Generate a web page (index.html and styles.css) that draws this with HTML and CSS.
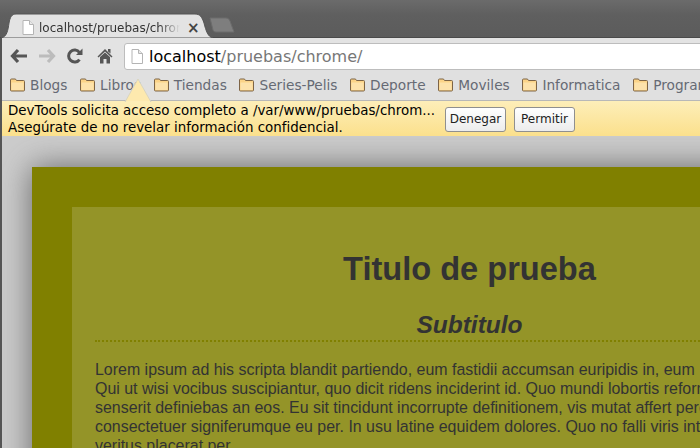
FILE: index.html
```html
<!DOCTYPE html>
<html lang="es">
<head>
<meta charset="UTF-8" />
<title>localhost/pruebas/chrome</title>
<link rel="stylesheet" href="styles.css">
</head>
<body>

<svg class="defs" width="0" height="0">
<symbol id="folder" viewBox="0 0 15 14">
<path d="M.5 12V2Q.5 1 1.500 1H5Q6 1 6.500 2.500H13.500Q14.500 2.500 14.500 3.500V12Q14.500 13 13.500 13H1.500Q.5 13 .5 12Z" fill="#fbd388" stroke="#7d6446" stroke-width="1"/>
<path d="M1.500 4.500H13.500V12H1.500Z" fill="#fde2ab"/>
</symbol>
<symbol id="page" viewBox="0 0 12 15">
<path d="M1 .5H7.500L11.500 4.500V14.500H1Z" fill="#fff" stroke="#b4b4b4"/>
<path d="M7.500 .5V4.500H11.500" fill="#e8e8e8" stroke="#b4b4b4"/>
</symbol>
</svg>

<div class="tabstrip">
  <div class="tab">
    <svg class="tab-shape" width="212" height="25" viewBox="0 0 212 25">
      <path d="M0 25C6 24 7 17 8 10C9 4 11 1 15 1H194C199 1 201 4 203 10C205 18 207 24 212 25Z" fill="#e3e3e3" stroke="#555"/>
    </svg>
    <svg class="tab-icon" width="12" height="15"><use href="#page"/></svg>
    <span class="tab-title">localhost/pruebas/chrome</span>
    <span class="tab-close">×</span>
  </div>
  <svg class="newtab" width="26" height="16" viewBox="0 0 26 16">
    <path d="M1 1H17C19 1 20 2 21 4L25 15H7C5 15 4.500 14 4 13Z" fill="#7e7e7e" stroke="#6c6c6c"/>
  </svg>
</div>

<div class="toolbar">
  <svg class="tool" width="18" height="16" viewBox="0 0 18 16">
    <path d="M8 2L2.500 8L8 14M3 8H17" fill="none" stroke="#565656" stroke-width="3.200"/>
  </svg>
  <svg class="tool" width="18" height="16" viewBox="0 0 18 16">
    <path d="M10 2L15.500 8L10 14M15 8H1" fill="none" stroke="#bcbcbc" stroke-width="3.200"/>
  </svg>
  <svg class="tool tool-reload" width="18" height="16" viewBox="0 0 18 16">
    <path d="M13.500 11.500A6 6 0 1 1 13.500 4.500" fill="none" stroke="#565656" stroke-width="3"/>
    <path d="M10 7H16.500V.5Z" fill="#565656"/>
  </svg>
  <svg class="tool" width="18" height="16" viewBox="0 0 18 16">
    <path d="M9 1L16.500 8.500L15.500 9.500L9 3.500L2.500 9.500L1.500 8.500Z M12 1H14.500V5.500L12 3.500Z" fill="#565656"/>
    <path d="M4 9L9 4.500L14 9V15.500H10.500V11H7.500V15.500H4Z" fill="#565656"/>
  </svg>
  <div class="omnibox">
    <svg class="omni-icon" width="12" height="15"><use href="#page"/></svg>
    <span class="url-host">localhost</span><span class="url-path">/pruebas/chrome/</span>
  </div>
</div>

<div class="bookmarks">
  <a class="bookmark"><svg width="15" height="14"><use href="#folder"/></svg>Blogs</a>
  <a class="bookmark"><svg width="15" height="14"><use href="#folder"/></svg>Libros</a>
  <a class="bookmark"><svg width="15" height="14"><use href="#folder"/></svg>Tiendas</a>
  <a class="bookmark"><svg width="15" height="14"><use href="#folder"/></svg>Series-Pelis</a>
  <a class="bookmark"><svg width="15" height="14"><use href="#folder"/></svg>Deporte</a>
  <a class="bookmark"><svg width="15" height="14"><use href="#folder"/></svg>Moviles</a>
  <a class="bookmark"><svg width="15" height="14"><use href="#folder"/></svg>Informatica</a>
  <a class="bookmark"><svg width="15" height="14"><use href="#folder"/></svg>Programacion</a>
</div>

<div class="infobar">
  <svg class="infobar-arrow" width="28" height="24" viewBox="0 0 28 24">
    <path d="M1 24L14 1L27 24Z" fill="#fde9ae" stroke="#d8d4c0"/>
    <path d="M2 23H26V24H2Z" fill="#fdecb8"/>
  </svg>
  <div class="infobar-text">
    DevTools solicita acceso completo a /var/www/pruebas/chrom...<br>
    Asegúrate de no revelar información confidencial.
  </div>
  <button class="btn">Denegar</button>
  <button class="btn">Permitir</button>
</div>

<div class="viewport">
  <div class="page">
    <div class="inner">
      <h1>Titulo de prueba</h1>
      <h2>Subtitulo</h2>
      <p>Lorem ipsum ad his scripta blandit partiendo, eum fastidii accumsan euripidis in, eum liber hendrerit an. Qui ut wisi vocibus suscipiantur, quo dicit ridens inciderint id. Quo mundi lobortis reformidans eu, legimus senserit definiebas an eos. Eu sit tincidunt incorrupte definitionem, vis mutat affert percipit cu, eirmod consectetuer signiferumque eu per. In usu latine equidem dolores. Quo no falli viris intellegam, ut fugit veritus placerat per.</p>
    </div>
  </div>
</div>

</body>
</html>
```

FILE: styles.css
```css
html, body {
  height: 100%;
}
body {
  margin: 0;
  width: 700px;
  height: 448px;
  overflow: hidden;
  background: #555;
  display: flex;
  flex-direction: column;
  font-family: "DejaVu Sans", sans-serif;
}
.defs {
  position: absolute;
}

/* Tabs */
.tabstrip {
  height: 38px;
  flex-shrink: 0;
  background: linear-gradient(#6b6b6b, #5f5f5f 40%, #5c5c5c);
  border-bottom: 1px solid #4a4a4a;
  box-sizing: border-box;
  display: flex;
  align-items: flex-end;
  padding-left: 1px;
}
.tab {
  position: relative;
  width: 212px;
  height: 25px;
  display: flex;
  align-items: center;
  padding: 4px 0 0 21px;
  box-sizing: border-box;
  font-size: 12px;
  color: #333;
  margin-bottom: -1px;
}
.tab-shape {
  position: absolute;
  left: 0;
  top: 0;
}
.tab-icon {
  position: relative;
  flex-shrink: 0;
  margin-right: 5px;
}
.tab-title {
  position: relative;
  width: 141px;
  overflow: hidden;
  white-space: nowrap;
  -webkit-mask-image: linear-gradient(90deg, #000 85%, transparent);
  mask-image: linear-gradient(90deg, #000 85%, transparent);
}
.tab-close {
  position: relative;
  margin: 1px 0 0 7px;
  font-size: 15px;
  font-weight: bold;
  line-height: 1;
  color: #444;
}
.newtab {
  margin: 0 0 4px -4px;
}

/* Toolbar */
.toolbar {
  height: 32px;
  flex-shrink: 0;
  margin-left: 2px;
  background: #e3e3e3;
  display: flex;
  align-items: center;
  padding: 4px 0 0 8px;
  box-sizing: border-box;
}
.tool {
  margin-right: 10px;
  flex-shrink: 0;
}
.tool-reload {
  margin-right: 12px;
}
.omnibox {
  flex: 1;
  height: 27px;
  margin: 1px -10px 0 0;
  background: #fff;
  border: 1px solid #bdbdbd;
  border-radius: 3px;
  display: flex;
  align-items: center;
  padding-left: 6px;
  font-size: 16px;
  box-sizing: border-box;
}
.omni-icon {
  margin-right: 6px;
}
.url-host {
  color: #000;
}
.url-path {
  color: #777;
}

/* Bookmarks */
.bookmarks {
  height: 31px;
  flex-shrink: 0;
  margin-left: 2px;
  padding-left: 8px;
  background: #e0e0e0;
  border-bottom: 1px solid #b8b8b8;
  box-sizing: border-box;
  display: flex;
  align-items: center;
  gap: 12.700px;
  font-size: 13.700px;
  color: #666a74;
  white-space: nowrap;
  overflow: hidden;
}
.bookmark {
  display: flex;
  align-items: center;
  gap: 5px;
}

/* Infobar */
.infobar {
  position: relative;
  height: 35px;
  flex-shrink: 0;
  margin-left: 2px;
  padding: 1px 0 0 6px;
  background: linear-gradient(#fdeeb9, #fbe08c);
  box-sizing: border-box;
  display: flex;
  align-items: center;
  font-size: 13.400px;
  color: #000;
  white-space: nowrap;
}
.infobar-arrow {
  position: absolute;
  left: 122px;
  top: -23px;
}
.infobar-text {
  line-height: 17px;
  width: 437px;
}
.btn {
  height: 25px;
  width: 61px;
  padding: 0;
  margin-right: 8px;
  font-family: inherit;
  font-size: 12px;
  color: #222;
  background: linear-gradient(#fff, #ececec);
  border: 1px solid #8f8f8f;
  border-radius: 3px;
}

/* Page */
.viewport {
  flex: 1;
  margin-left: 2px;
  background: #ccc;
  overflow: hidden;
  padding: 31px 0 0 30px;
  font-family: "Liberation Sans", Arial, sans-serif;
  color: #333;
}
.page {
  width: 876px;
  box-sizing: border-box;
  padding: 40px;
  background: #808000;
  box-shadow: 0 0 30px #666;
}
.inner {
  padding: 24px 24px 24px 23px;
  background: #949428;
}
h1 {
  margin: 19px 0 0;
  font-size: 32.600px;
  line-height: 37px;
  text-align: center;
}
h2 {
  margin: 24px 0 0;
  padding-bottom: 1px;
  font-size: 24.500px;
  line-height: 28px;
  font-style: italic;
  text-align: center;
  border-bottom: 2px dotted #808000;
}
p {
  margin: 18px 0 0;
  font-size: 15.950px;
  line-height: 19px;
}
```
